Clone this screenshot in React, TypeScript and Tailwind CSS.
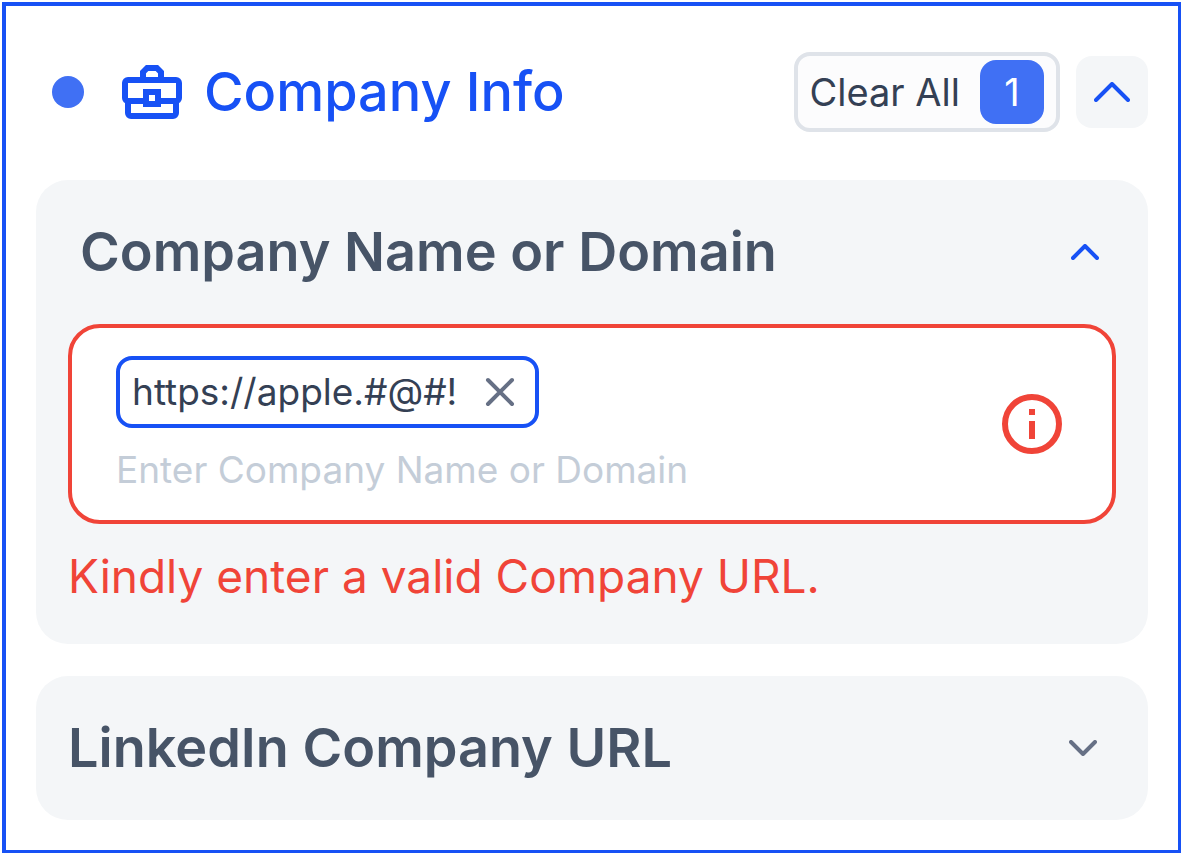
import { useState } from "react";

interface ChevronProps {
  up?: boolean;
  large?: boolean;
}

const Chevron = ({ up, large }: ChevronProps) => {
  const width = large ? 36 : 28;
  const height = large ? 20 : 16;
  const path = up
    ? `M2 ${height - 2}L${width / 2} 2L${width - 2} ${height - 2}`
    : `M2 2L${width / 2} ${height - 2}L${width - 2} 2`;

  return (
    <svg width={width} height={height} viewBox={`0 0 ${width} ${height}`} fill="none" aria-hidden="true">
      <path d={path} stroke="currentColor" strokeWidth="4" strokeLinecap="round" strokeLinejoin="round" />
    </svg>
  );
};

const BriefcaseIcon = () => (
  <svg className="size-18 shrink-0" viewBox="0 0 24 24" fill="none" stroke="currentColor" strokeWidth="2" aria-hidden="true">
    <path d="M9 8V5.4L10.4 4h3.2L15 5.4V8" />
    <path d="M10 15H4a1 1 0 0 1-1-1V9a1 1 0 0 1 1-1h16a1 1 0 0 1 1 1v5a1 1 0 0 1-1 1h-6" />
    <path d="M4 15v4a1 1 0 0 0 1 1h14a1 1 0 0 0 1-1v-4" />
    <path d="M10 12h4v4h-4z" />
  </svg>
);

const InfoIcon = () => (
  <svg className="size-18 shrink-0 text-[#f04438]" viewBox="0 0 24 24" fill="none" aria-hidden="true">
    <circle cx="12" cy="12" r="9" stroke="currentColor" strokeWidth="2" />
    <path d="M11 7h2v2h-2zM11 11h2v6h-2z" fill="currentColor" />
  </svg>
);

const App = () => {
  const [tags, setTags] = useState(["https://apple.#@#!"]);
  const [draft, setDraft] = useState("");

  return (
    <main className="pt-[2px] pl-[2px] font-['Inter',sans-serif]">
      <section className="border-4 border-r-[3px] border-b-[3px] border-[#1751f5] bg-white px-[30px] pt-[46px] pb-[30px]">
        <header className="mb-12 flex items-center justify-between pl-4">
          <div className="flex items-center text-[#1751f5]">
            <span className="mr-8 size-8 rounded-full bg-[#4070f4]" />
            <BriefcaseIcon />
            <h1 className="ml-4 text-[54px] leading-20 font-medium">Company Info</h1>
          </div>
          <div className="flex items-center gap-4">
            <button
              type="button"
              onClick={() => setTags([])}
              className="flex h-20 items-center gap-5 rounded-2xl border-4 border-[#dfe3e9] bg-[#fcfcfd] px-3 text-[38px] text-[#344054]"
            >
              Clear All
              <span className="flex size-16 items-center justify-center rounded-2xl bg-[#4070f4] text-white">{tags.length}</span>
            </button>
            <button
              type="button"
              aria-label="Collapse section"
              className="flex size-18 items-center justify-center rounded-2xl bg-[#f4f6f8] text-[#1751f5]"
            >
              <Chevron up large />
            </button>
          </div>
        </header>

        <div className="flex flex-col gap-8">
          <div className="rounded-[32px] bg-[#f4f6f8] p-8">
            <div className="mb-8 flex h-20 items-center justify-between pr-[17px] pl-3">
              <h2 className="text-[54px] leading-20 font-semibold text-[#475467]">
                <label htmlFor="company">Company Name or Domain</label>
              </h2>
              <button type="button" aria-label="Collapse" className="text-[#1751f5]">
                <Chevron up />
              </button>
            </div>

            <div className="flex items-center rounded-[32px] border-4 border-[#f04438] bg-white px-11 py-6">
              <div className="flex min-w-0 flex-1 flex-col items-start gap-4 pt-1">
                {tags.map((tag) => (
                  <span
                    key={tag}
                    className="flex h-18 items-center gap-7 rounded-2xl border-4 border-[#1751f5] px-3 text-[37px] text-[#344054]"
                  >
                    {tag}
                    <button
                      type="button"
                      aria-label={`Remove ${tag}`}
                      onClick={() => setTags(tags.filter((t) => t !== tag))}
                      className="mr-2 text-[#667085]"
                    >
                      <svg width="30" height="30" viewBox="0 0 30 30" fill="none" aria-hidden="true">
                        <path d="M3 3l24 24M27 3L3 27" stroke="currentColor" strokeWidth="4" strokeLinecap="round" />
                      </svg>
                    </button>
                  </span>
                ))}
                <input
                  id="company"
                  type="text"
                  value={draft}
                  onChange={(e) => setDraft(e.target.value)}
                  placeholder="Enter Company Name or Domain"
                  className="h-13 w-full text-[37px] text-[#344054] outline-none placeholder:text-[#c4cdd8]"
                />
              </div>
              <InfoIcon />
            </div>
            <p className="mt-4 text-[46px] leading-[72px] text-[#f04438]">Kindly enter a valid Company URL.</p>
          </div>

          <div className="flex items-center justify-between rounded-[32px] bg-[#f4f6f8] p-8 pr-[51px]">
            <h2 className="text-[54px] leading-20 font-semibold text-[#475467]">LinkedIn Company URL</h2>
            <button type="button" aria-label="Expand" className="text-[#667085]">
              <Chevron />
            </button>
          </div>
        </div>
      </section>
    </main>
  );
};

export default App;
